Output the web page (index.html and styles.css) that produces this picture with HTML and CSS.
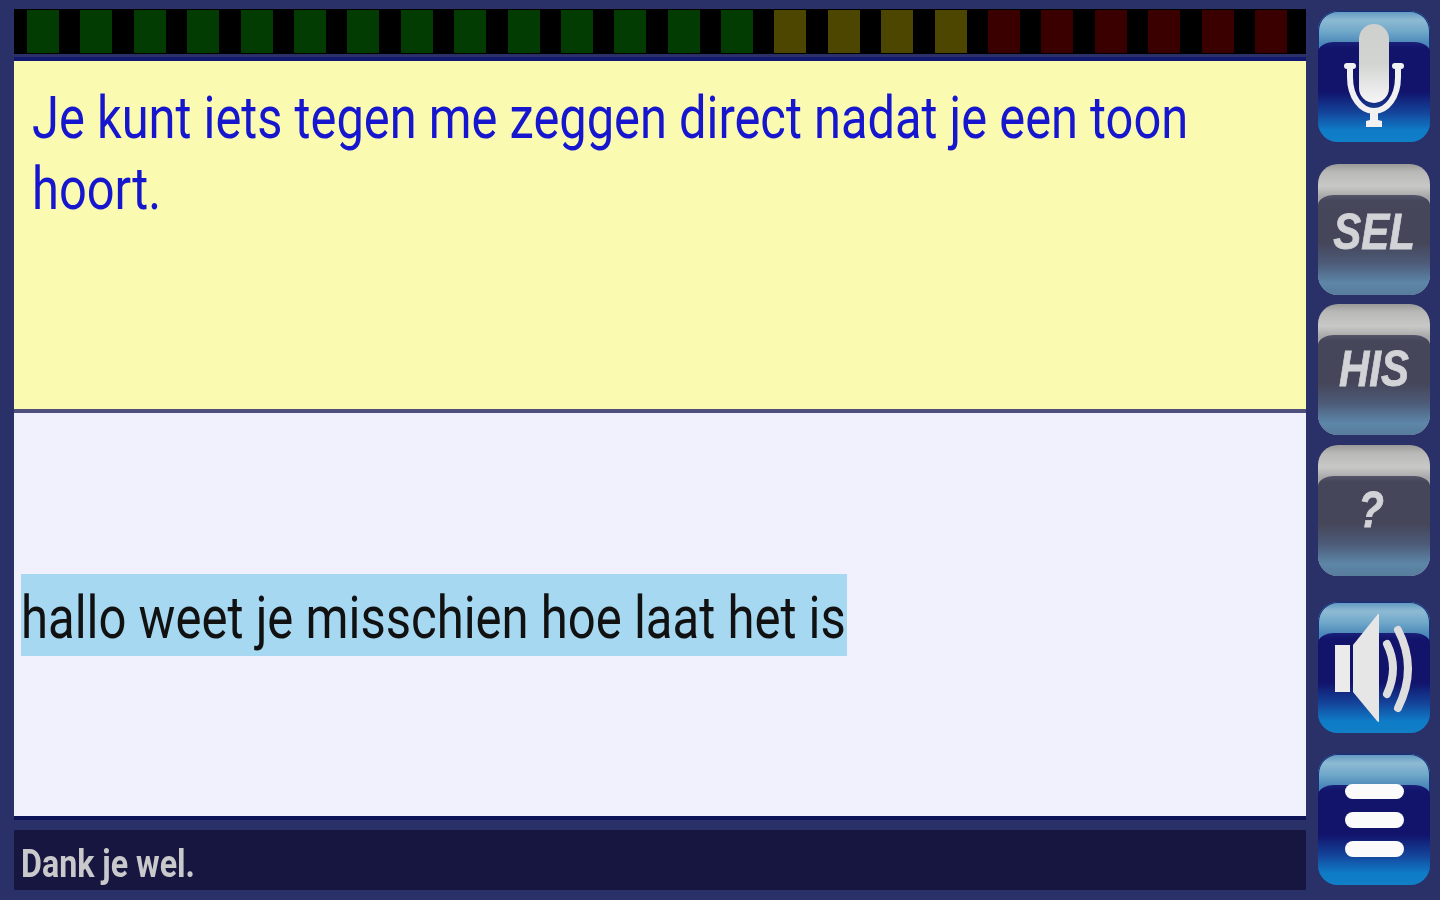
FILE: index.html
```html
<!DOCTYPE html>
<html lang="nl">
<head>
<meta charset="utf-8">
<title>Spraak</title>
<link rel="stylesheet" href="styles.css">
</head>
<body>
<div class="app">
  <main class="main">
    <div class="meter">
      <i class="bar green"></i><i class="bar green"></i><i class="bar green"></i><i class="bar green"></i><i class="bar green"></i><i class="bar green"></i><i class="bar green"></i><i class="bar green"></i><i class="bar green"></i><i class="bar green"></i><i class="bar green"></i><i class="bar green"></i><i class="bar green"></i><i class="bar green"></i>
      <i class="bar amber"></i><i class="bar amber"></i><i class="bar amber"></i><i class="bar amber"></i>
      <i class="bar red"></i><i class="bar red"></i><i class="bar red"></i><i class="bar red"></i><i class="bar red"></i><i class="bar red"></i>
    </div>
    <section class="prompt">
      <p class="prompt-text">Je kunt iets tegen me zeggen direct nadat je een toon<br>hoort.</p>
    </section>
    <section class="answer">
      <div class="highlight"><span class="answer-text">hallo weet je misschien hoe laat het is</span></div>
    </section>
    <footer class="status"><span class="status-text">Dank je wel.</span></footer>
  </main>
  <aside class="side">
    <button class="btn blue b-mic" aria-label="Microfoon">
      <svg class="icon" viewBox="0 0 112 131">
        <defs>
          <linearGradient id="capsule" x1="0" y1="0" x2="0" y2="1">
            <stop offset="0" stop-color="#cfd0ce"/>
            <stop offset="0.5" stop-color="#d2d4d2"/>
            <stop offset="1" stop-color="#f6f6f6"/>
          </linearGradient>
        </defs>
        <path d="M32 55V66C32 86 43 100 56 100S80 86 80 66V55" fill="none" stroke="#f1f1f1" stroke-width="6" stroke-linecap="round"/>
        <path d="M29 55H35M77 55H83" stroke="#f1f1f1" stroke-width="6" stroke-linecap="round"/>
        <rect x="41" y="13" width="30" height="79" rx="15" fill="url(#capsule)"/>
        <path d="M52 99H60V109L64 110V116H48V110L52 109Z" fill="#f1f1f1"/>
      </svg>
    </button>
    <button class="btn grey b-sel"><span class="label label-sel">SEL</span></button>
    <button class="btn grey b-his"><span class="label">HIS</span></button>
    <button class="btn grey b-help"><span class="label label-help">?</span></button>
    <button class="btn blue b-speaker" aria-label="Geluid">
      <svg class="icon" viewBox="0 0 112 131">
        <rect x="17" y="43" width="15" height="47" fill="#eceaea"/>
        <path d="M35 43L60 12Q61 11 61 13V119Q61 121 59 119L35 90Z" fill="#e6e6e6"/>
        <path d="M69 42Q81 66 69 92M80 28Q100 66 80 106" fill="none" stroke="#dedede" stroke-width="8" stroke-linecap="round"/>
      </svg>
    </button>
    <button class="btn blue b-menu" aria-label="Menu">
      <svg class="icon" viewBox="0 0 112 131">
        <rect x="27" y="30" width="59" height="15" rx="7.5" fill="#fbfbfb"/>
        <rect x="27" y="58" width="59" height="16" rx="8" fill="#fbfbfb"/>
        <rect x="27" y="87" width="59" height="16" rx="8" fill="#fbfbfb"/>
      </svg>
    </button>
  </aside>
</div>
</body>
</html>
```
FILE: styles.css
```css
* { box-sizing: border-box; }
html, body { margin: 0; height: 100%; overflow: hidden; }
body { background: #2a3068; font-family: Roboto, "Liberation Sans", sans-serif; }
.app { display: flex; width: 1440px; height: 900px; padding: 9px 10px 10px 14px; gap: 12px; filter: blur(0.5px); }
.main { display: flex; flex-direction: column; width: 1292px; }

.meter { display: flex; gap: 21.4px; height: 45px; padding: 1px 0 1px 13px; background: #000; flex: none; }
.bar { display: block; width: 32px; }
.green { background: #033c03; }
.amber { background: #4c4600; }
.red { background: #3a0000; }

.prompt { height: 348px; margin-top: 7px; padding: 21px 0 0 18px; background: #fafab0; flex: none; box-shadow: 0 -4px 0 #12196e; overflow: hidden; }
.prompt-text { margin: 0; width: 1500px; color: #1616cf; font-size: 60px; line-height: 71px; white-space: nowrap; transform: scaleX(0.8134); transform-origin: 0 0; }

.answer { display: flex; align-items: center; height: 407px; padding: 0 0 0 7px; background: #f0f1fd; border-top: 4px solid #50507c; flex: none; box-shadow: 0 4px 0 #0e1458; }
.highlight { width: 826px; height: 82px; margin-top: 1px; background: #a7d8f1; }
.answer-text { display: block; width: 1100px; color: #111; font-size: 60px; line-height: 88px; white-space: nowrap; transform: scaleX(0.817); transform-origin: 0 0; }

.status { height: 60px; margin-top: 14px; padding-left: 7px; background: #161641; flex: none; }
.status-text { display: block; width: 300px; color: #c9c9cb; font-size: 39px; font-weight: 700; line-height: 68px; white-space: nowrap; transform: scaleX(0.825); transform-origin: 0 0; }

.side { display: flex; flex-direction: column; width: 112px; padding-top: 2px; }
.btn { position: relative; display: block; width: 112px; height: 131px; padding: 0; border: 0; border-radius: 20px; overflow: hidden; flex: none; font-family: "Liberation Sans", Arial, sans-serif; }
.btn::before { content: ""; position: absolute; left: 0; right: 0; top: 31px; bottom: 0; border-radius: 16px 16px 0 0 / 10px 10px 0 0; }
.blue { background: linear-gradient(#5f97c0 0, #8dbad3 7%, #6fa7c9 16%, #4a86b8 25%); box-shadow: inset 0 0 0 1px #15307c; }
.blue::before { background: linear-gradient(#1a2078 0, #12146c 6%, #12146c 50%, #14439a 70%, #0f7bc6 88%, #1080c8 100%); }
.grey { background: linear-gradient(#9a9a98 0, #b8b8b6 6%, #c8c8c6 17%, #a8a8aa 25%); }
.grey::before { background: linear-gradient(#55556a 0, #45465a 6%, #45465a 48%, #4d5b78 68%, #5d86a8 88%, #587c9c 100%); }
.icon { position: absolute; left: 0; top: 0; width: 112px; height: 131px; }
.label { position: relative; display: block; color: #d2d3d6; font-size: 50px; font-weight: 700; font-style: italic; line-height: 131px; text-align: center; transform: scaleX(0.84); -webkit-text-stroke: 0.8px #d2d3d6; }
.label-sel { top: 3px; }
.label-help { left: -3px; }

.b-sel { margin-top: 22px; }
.b-his { margin-top: 9px; }
.b-help { margin-top: 10px; }
.b-speaker { margin-top: 26px; }
.b-menu { margin-top: 21px; }
```
